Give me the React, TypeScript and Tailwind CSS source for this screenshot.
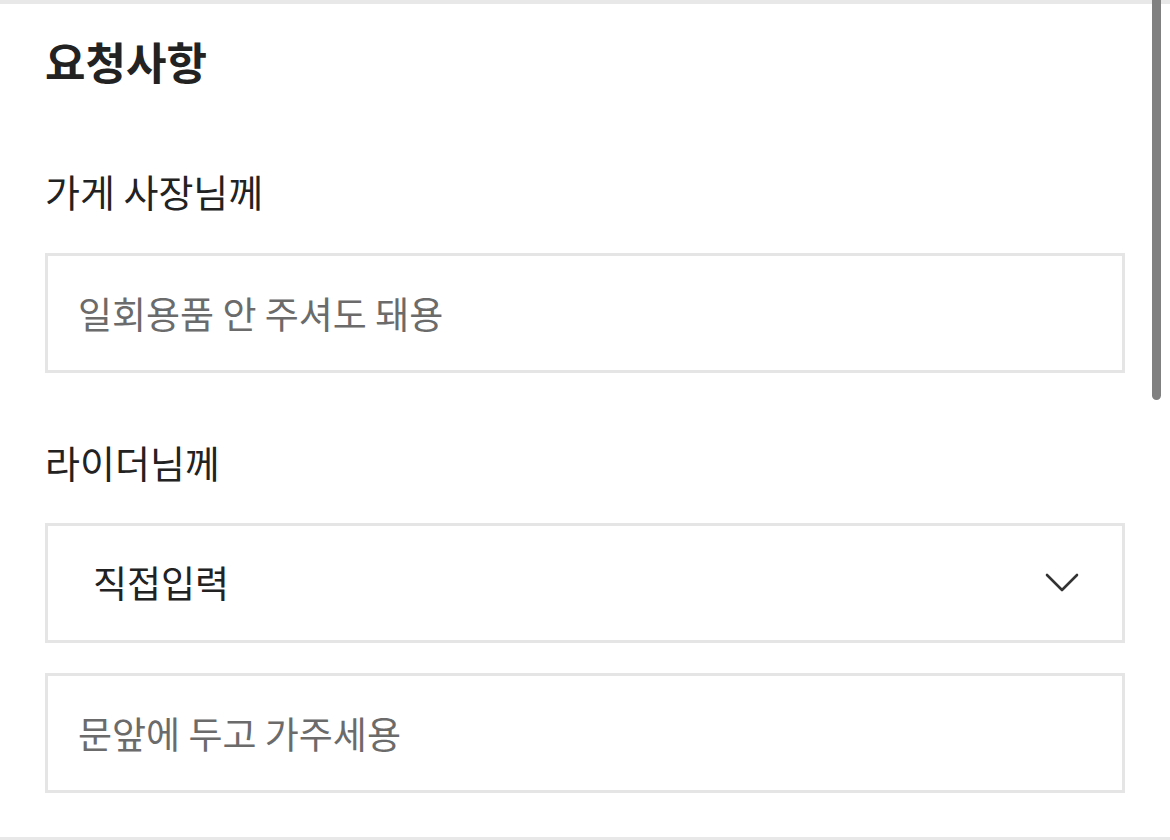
import { useState } from "react";

const font = { fontFamily: '"Noto Sans CJK KR", "Noto Sans", sans-serif' };

function Chevron() {
  return (
    <svg width="34" height="20" viewBox="0 0 34 20" fill="none">
      <path d="M2 2 L17 17 L32 2" stroke="#333" strokeWidth="2.6" strokeLinecap="round" strokeLinejoin="round" />
    </svg>
  );
}

export default function App() {
  const [store, setStore] = useState("");
  const [rider, setRider] = useState("");

  return (
    <div className="relative w-[1170px] h-[840px] overflow-hidden bg-white" style={font}>
      <div className="h-[4px] bg-[#e8e8e8]" />
      <div className="absolute right-[9px] top-0 w-[9px] h-[400px] rounded-b-full bg-[#808080]" />

      <div className="px-[45px] pt-[29px] h-[833px]">
        <h1 className="text-[44px] leading-[56px] font-bold text-[#222]">요청사항</h1>

        <div className="mt-[78px] text-[38px] leading-[48px] text-[#222]">가게 사장님께</div>
        <input
          value={store}
          onChange={e => setStore(e.target.value)}
          placeholder="일회용품 안 주셔도 돼용"
          className="mt-[38px] block w-full h-[120px] border-[3px] border-[#e5e5e5] px-[30px] text-[37px] text-[#222] placeholder:text-[#6b6b6b] outline-none"
        />

        <div className="mt-[65px] text-[38px] leading-[48px] text-[#222]">라이더님께</div>
        <div className="mt-[37px] flex items-center justify-between h-[120px] border-[3px] border-[#e5e5e5] pl-[45px] pr-[43px]">
          <span className="text-[37px] text-[#222]">직접입력</span>
          <Chevron />
        </div>
        <input
          value={rider}
          onChange={e => setRider(e.target.value)}
          placeholder="문앞에 두고 가주세용"
          className="mt-[30px] block w-full h-[120px] border-[3px] border-[#e5e5e5] px-[30px] text-[37px] text-[#222] placeholder:text-[#6b6b6b] outline-none"
        />
      </div>
      <div className="h-[3px] bg-[#e8e8e8]" />
    </div>
  );
}
